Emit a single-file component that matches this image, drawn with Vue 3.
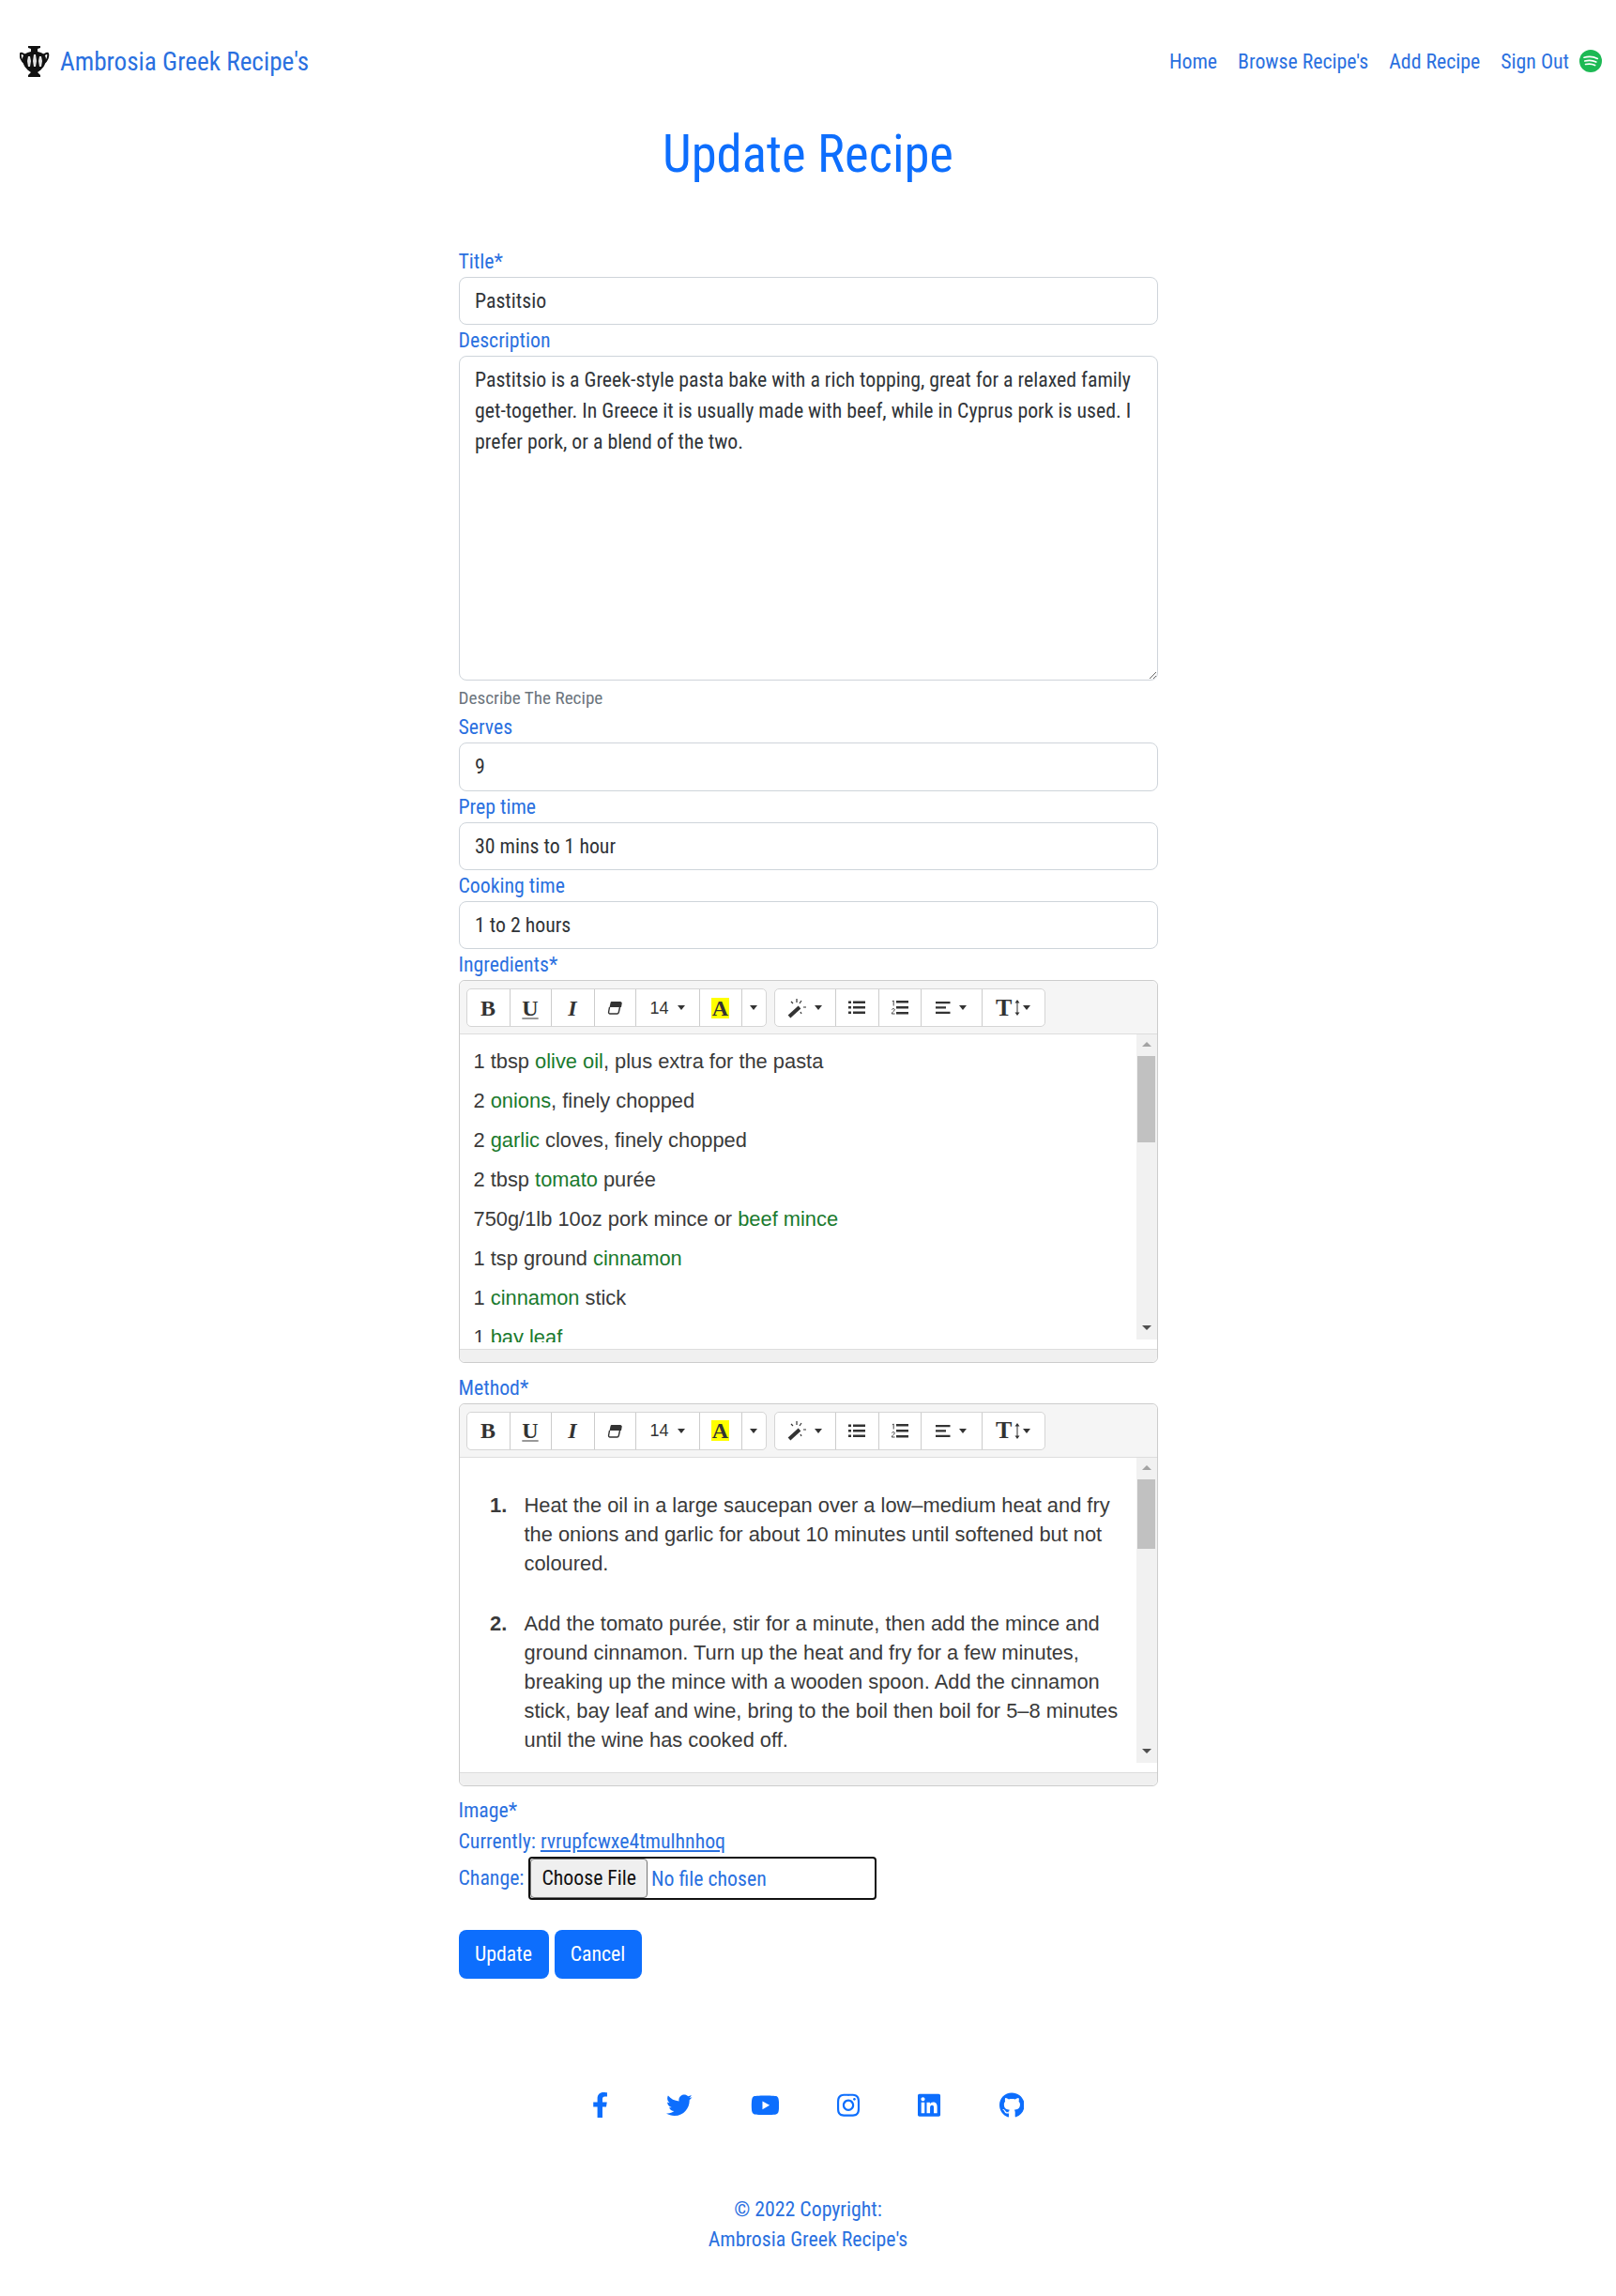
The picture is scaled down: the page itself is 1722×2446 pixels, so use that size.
<template>
  <div class="page">
    <nav class="navbar">
      <a class="brand" href="#">
        <svg class="vase" viewBox="0 0 32 33">
          <path fill="#111" d="M9 0h13v2l-3 1v3c5 1 9 3 9 8 0 6-4 11-9 14l3 3v2H9v-2l3-3c-5-3-9-8-9-14 0-5 4-7 9-8V3L9 2z" />
          <path fill="none" stroke="#111" stroke-width="2" d="M6 10C4 9 2 7 1 8c-1 3 1 8 4 10M25 10c2-1 4-3 5-2 1 3-1 8-4 10" />
          <path fill="#e4e4e4" d="M9 11h2l1 5-1 6H9l-1-6zM15 9h2l1 7-1 6h-2l-1-6zM21 11h2l1 5-1 6h-2l-1-6z" />
        </svg>
        <span class="brand-name">Ambrosia Greek Recipe's</span>
      </a>
      <div class="nav-links">
        <a href="#">Home</a>
        <a href="#">Browse Recipe's</a>
        <a href="#">Add Recipe</a>
        <a href="#">Sign Out</a>
        <svg class="spotify" viewBox="0 0 24 24">
          <circle cx="12" cy="12" r="12" fill="#1db954" />
          <path d="M5 8.2c5-1.4 10-1 14.300 1.200M5.800 12c4.300-1.100 8.400-.8 12 1.100M6.600 15.500c3.600-.8 7-.6 10 1" fill="none" stroke="#fff" stroke-width="1.700" stroke-linecap="round" />
        </svg>
      </div>
    </nav>

    <h1>Update Recipe</h1>

    <form class="recipe-form" @submit.prevent>
      <label>Title*</label>
      <input class="control" type="text" value="Pastitsio" />

      <label>Description</label>
      <textarea class="control desc" :value="description"></textarea>
      <div class="help">Describe The Recipe</div>

      <label>Serves</label>
      <input class="control" type="text" value="9" />
      <label>Prep time</label>
      <input class="control" type="text" value="30 mins to 1 hour" />
      <label>Cooking time</label>
      <input class="control" type="text" value="1 to 2 hours" />

      <template v-for="ed in editors" :key="ed.name">
        <label>{{ ed.label }}</label>
        <div class="editor" :class="ed.name">
          <div class="toolbar">
            <div class="btn-group">
              <span class="tb w46 serif"><b>B</b></span>
              <span class="tb w44 serif"><b class="under">U</b></span>
              <span class="tb w46 serif"><b><i>I</i></b></span>
              <span class="tb w44">
                <svg width="16" height="15" viewBox="0 0 16 15">
                  <path fill="#333" d="M5 1h9c1 0 2 1 1.700 2L15 7H2.500l1-4.500C3.700 1.500 4 1 5 1z" />
                  <path fill="none" stroke="#333" stroke-width="1.400" d="M2.500 7L1.600 12c-.2 1 .4 2 1.400 2h7.500c1 0 1.600-.6 1.800-1.500L13.500 7" />
                </svg>
              </span>
              <span class="tb w68 size">14<i class="caret"></i></span>
              <span class="tb w45 serif"><b class="hl">A</b></span>
              <span class="tb w26"><i class="caret"></i></span>
            </div>
            <div class="btn-group">
              <span class="tb w65">
                <svg width="24" height="22" viewBox="0 0 24 22">
                  <path stroke="#333" stroke-width="4" d="M2 20L13 10" />
                  <path stroke="#333" stroke-width="1.200" d="M4 4l2 2M10 1v4M15 3l-2 3M17 10h3M14 15l1 2" />
                </svg>
                <i class="caret"></i>
              </span>
              <span class="tb w46">
                <svg width="18" height="15" viewBox="0 0 18 15"><path fill="#333" d="M0 .5h3V3H0zM5 .5h13V3H5zM0 6h3v2.500H0zM5 6h13v2.500H5zM0 11.500h3V14H0zM5 11.500h13V14H5z" /></svg>
              </span>
              <span class="tb w45">
                <svg width="18" height="17" viewBox="0 0 18 17"><path fill="#333" d="M5 1h13v2.500H5zM5 7h13v2.500H5zM5 13h13v2.500H5z" /><path fill="none" stroke="#333" stroke-width=".900" d="M.8 1.800L2.200 1v5.500M.3 10.500c1-1.500 3-1 3 .2 0 1.500-3 2.300-3 4.300h3.300" /></svg>
              </span>
              <span class="tb w66 gap8">
                <svg width="16" height="13" viewBox="0 0 16 13"><path fill="#333" d="M0 0h15.500v2.300H0zM0 5.300h11v2.300H0zM0 10.700h15.500V13H0z" /></svg>
                <i class="caret"></i>
              </span>
              <span class="tb w66 serif tight">
                <b class="tt">T</b>
                <svg width="6" height="17" viewBox="0 0 6 17"><path fill="#333" d="M3 0l2.500 3.500h-2V13.500h2L3 17 .5 13.500h2V3.500h-2z" /></svg>
                <i class="caret"></i>
              </span>
            </div>
          </div>

          <div class="note-body">
            <div class="note-text" v-if="ed.name === 'ingredients'">
              <p v-for="(line, i) in ingredients" :key="i">
                <template v-for="(part, j) in line" :key="j">
                  <span :class="{ green: j % 2 === 1 }">{{ part }}</span>
                </template>
              </p>
            </div>
            <div class="note-text" v-else>
              <ol>
                <li v-for="(step, i) in method" :key="i">{{ step }}</li>
              </ol>
            </div>
            <div class="scrollbar">
              <div class="arrow up"></div>
              <div class="thumb" :style="{ height: ed.thumb + 'px' }"></div>
              <div class="track"></div>
              <div class="arrow down"></div>
            </div>
          </div>
          <div class="status"></div>
        </div>
      </template>

      <label>Image*</label>
      <div class="current">Currently: <a href="#">rvrupfcwxe4tmulhnhoq</a></div>
      <div class="change">
        <span>Change:</span>
        <input class="file" type="file" />
      </div>

      <div class="actions">
        <button type="button" class="update">Update</button>
        <button type="button" class="cancel">Cancel</button>
      </div>
    </form>

    <footer>
      <div class="social">
        <svg v-for="icon in icons" :key="icon.name" :viewBox="`0 0 ${icon.w} 512`" :width="icon.w * 0.0537" height="27.500">
          <path :d="icon.d" fill="#0d6efd" />
        </svg>
      </div>
      <div class="copy">
        <div>© 2022 Copyright:</div>
        <a href="#">Ambrosia Greek Recipe's</a>
      </div>
    </footer>
  </div>
</template>

<script setup>
const description = "Pastitsio is a Greek-style pasta bake with a rich topping, great for a relaxed family get-together. In Greece it is usually made with beef, while in Cyprus pork is used. I prefer pork, or a blend of the two."

const editors = [
  { name: "ingredients", label: "Ingredients*", thumb: 92 },
  { name: "method", label: "Method*", thumb: 74 }
]

// every odd part of a line is an ingredient link, shown in green
const ingredients = [
  ["1 tbsp ", "olive oil", ", plus extra for the pasta"],
  ["2 ", "onions", ", finely chopped"],
  ["2 ", "garlic", " cloves, finely chopped"],
  ["2 tbsp ", "tomato", " purée"],
  ["750g/1lb 10oz pork mince or ", "beef mince"],
  ["1 tsp ground ", "cinnamon"],
  ["1 ", "cinnamon", " stick"],
  ["1 ", "bay leaf"]
]

const method = [
  "Heat the oil in a large saucepan over a low–medium heat and fry the onions and garlic for about 10 minutes until softened but not coloured.",
  "Add the tomato purée, stir for a minute, then add the mince and ground cinnamon. Turn up the heat and fry for a few minutes, breaking up the mince with a wooden spoon. Add the cinnamon stick, bay leaf and wine, bring to the boil then boil for 5–8 minutes until the wine has cooked off."
]

const icons = [
  { name: "facebook", w: 320, d: "M279.14 288l14.22-92.66h-88.91v-60.13c0-25.35 12.42-50.06 52.24-50.06h40.42V6.26S260.43 0 225.36 0c-73.22 0-121.08 44.38-121.08 124.72v70.62H22.89V288h81.39v224h100.17V288z" },
  { name: "twitter", w: 512, d: "M459.37 151.716c.325 4.548.325 9.097.325 13.645 0 138.72-105.583 298.558-298.558 298.558-59.452 0-114.68-17.219-161.137-47.106 8.447.974 16.568 1.299 25.34 1.299 49.055 0 94.213-16.568 130.274-44.832-46.132-.975-84.792-31.188-98.112-72.772 6.498.974 12.995 1.624 19.818 1.624 9.421 0 18.843-1.3 27.614-3.573-48.081-9.747-84.143-51.98-84.143-102.985v-1.299c13.969 7.797 30.214 12.67 47.431 13.319-28.264-18.843-46.781-51.005-46.781-87.391 0-19.492 5.197-37.36 14.294-52.954 51.655 63.675 129.3 105.258 216.365 109.807-1.624-7.797-2.599-15.918-2.599-24.04 0-57.828 46.782-104.934 104.934-104.934 30.213 0 57.502 12.67 76.67 33.137 23.715-4.548 46.456-13.32 66.599-25.34-7.798 24.366-24.366 44.833-46.132 57.827 21.117-2.273 41.584-8.122 60.426-16.243-14.292 20.791-32.161 39.308-52.628 54.253z" },
  { name: "youtube", w: 576, d: "M549.655 124.083c-6.281-23.65-24.787-42.276-48.284-48.597C458.781 64 288 64 288 64S117.22 64 74.629 75.486c-23.497 6.322-42.003 24.947-48.284 48.597-11.412 42.867-11.412 132.305-11.412 132.305s0 89.438 11.412 132.305c6.281 23.65 24.787 41.5 48.284 47.821C117.22 448 288 448 288 448s170.78 0 213.371-11.486c23.497-6.321 42.003-24.171 48.284-47.821 11.412-42.867 11.412-132.305 11.412-132.305s0-89.438-11.412-132.305zm-317.51 213.508V175.185l142.739 81.205-142.739 81.201z" },
  { name: "instagram", w: 448, d: "M224.1 141c-63.6 0-114.9 51.3-114.9 114.9s51.3 114.9 114.9 114.9S339 319.5 339 255.9 287.7 141 224.1 141zm0 189.6c-41.1 0-74.7-33.5-74.7-74.7s33.5-74.7 74.7-74.7 74.7 33.5 74.7 74.7-33.6 74.7-74.7 74.7zm146.4-194.3c0 14.9-12 26.8-26.8 26.8-14.9 0-26.8-12-26.8-26.8s12-26.8 26.8-26.8 26.8 12 26.8 26.8zm76.1 27.2c-1.7-35.9-9.9-67.7-36.2-93.9-26.2-26.2-58-34.4-93.9-36.2-37-2.1-147.9-2.1-184.9 0-35.8 1.7-67.6 9.9-93.9 36.1s-34.4 58-36.2 93.9c-2.1 37-2.1 147.9 0 184.9 1.7 35.9 9.9 67.7 36.2 93.9s58 34.4 93.9 36.2c37 2.1 147.9 2.1 184.9 0 35.9-1.7 67.7-9.9 93.9-36.2 26.2-26.2 34.4-58 36.2-93.9 2.1-37 2.1-147.8 0-184.8zM398.8 388c-7.8 19.6-22.9 34.7-42.6 42.6-29.5 11.7-99.5 9-132.1 9s-102.7 2.6-132.1-9c-19.6-7.8-34.7-22.9-42.6-42.6-11.7-29.5-9-99.5-9-132.1s-2.6-102.7 9-132.1c7.8-19.6 22.9-34.7 42.6-42.6 29.5-11.7 99.5-9 132.1-9s102.7-2.6 132.1 9c19.6 7.8 34.7 22.9 42.6 42.6 11.7 29.5 9 99.5 9 132.1s2.7 102.7-9 132.1z" },
  { name: "linkedin", w: 448, d: "M416 32H31.9C14.3 32 0 46.5 0 64.3v383.4C0 465.5 14.3 480 31.9 480H416c17.6 0 32-14.5 32-32.3V64.3c0-17.8-14.4-32.3-32-32.3zM135.4 416H69V202.2h66.5V416zm-33.2-243c-21.3 0-38.5-17.3-38.5-38.5S80.9 96 102.2 96c21.2 0 38.5 17.3 38.5 38.5 0 21.3-17.2 38.5-38.5 38.5zm282.1 243h-66.4V312c0-24.8-.5-56.7-34.5-56.7-34.6 0-39.9 27-39.9 54.9V416h-66.4V202.2h63.7v29.2h.9c8.9-16.8 30.6-34.5 62.9-34.5 67.2 0 79.7 44.3 79.7 101.9V416z" },
  { name: "github", w: 496, d: "M165.9 397.4c0 2-2.3 3.6-5.2 3.6-3.3 0-5.6-1.6-5.6-3.6 0-2 2.3-3.6 5.2-3.6 3-.3 5.6 1.3 5.6 3.6zm-31.1-4.5c-.7 2 1.3 4.3 4.3 4.9 2.6 1 5.6 0 6.2-2s-1.3-4.3-4.3-5.2c-2.6-.7-5.5.3-6.2 2.3zm44.2-1.7c-2.9.7-4.9 2.6-4.6 4.9.3 2 2.9 3.3 5.9 2.6 2.9-.7 4.9-2.6 4.6-4.6-.3-1.9-3-3.2-5.9-2.9zM244.8 8C106.1 8 0 113.3 0 252c0 110.9 69.8 205.8 169.5 239.2 12.8 2.3 17.3-5.6 17.3-12.1 0-6.2-.3-40.4-.3-61.4 0 0-70 15-84.7-29.8 0 0-11.4-29.1-27.8-36.6 0 0-22.9-15.7 1.6-15.4 0 0 24.9 2 38.6 25.8 21.9 38.6 58.6 27.5 72.9 20.9 2.3-16 8.8-27.1 16-33.7-55.9-6.2-112.3-14.3-112.3-110.5 0-27.5 7.6-41.3 23.6-58.9-2.6-6.5-11.1-33.3 2.6-67.9 20.9-6.5 69 27 69 27 20-5.6 41.5-8.5 62.8-8.5s42.8 2.9 62.8 8.5c0 0 48.1-33.6 69-27 13.7 34.7 5.2 61.4 2.6 67.9 16 17.7 25.8 31.5 25.8 58.9 0 96.5-58.9 104.2-114.8 110.5 9.2 7.9 17 22.9 17 46.4 0 33.7-.3 75.4-.3 83.6 0 6.5 4.6 14.4 17.3 12.1C428.2 457.8 496 362.9 496 252 496 113.3 383.5 8 244.8 8z" }
]
</script>

<style scoped>
.page { font-family: "Roboto Condensed", "Liberation Sans Narrow", Roboto, sans-serif; font-stretch: 75%; font-size: 21.800px; line-height: 33px; color: #2a70df; background: #fff; min-height: 2446px; }
a { color: #2a70df; text-decoration: none; }

.navbar { display: flex; justify-content: space-between; align-items: center; padding: 48px 15px 0 21px; height: 34px; box-sizing: content-box; }
.brand { display: flex; align-items: center; gap: 11px; font-size: 27.200px; }
.brand-name { margin-top: 2px; }
.vase { width: 32px; height: 33px; }
.nav-links { display: flex; align-items: center; gap: 22px; }
.spotify { width: 24px; height: 24px; margin-left: -11px; }

h1 { margin: 49px 0 65px; font-size: 54.600px; line-height: 66px; font-weight: 400; text-align: center; color: #0d6efd; }

.recipe-form { width: 745px; margin: 0 auto; display: flex; flex-direction: column; }
.recipe-form label { display: block; }
.control { display: block; width: 100%; box-sizing: border-box; height: 51.300px; padding: 8px 16.500px; border: 1px solid #ced4da; border-radius: 8px; font: inherit; color: #303438; background: #fff; outline: none; }
.desc { height: 346px; resize: vertical; }
.help { margin-top: 5px; font-size: 19.200px; line-height: 28px; color: #6c757d; }

.editor { border: 1px solid #ccc; border-radius: 6px; margin-bottom: 9.400px; }
.toolbar { display: flex; gap: 8px; height: 57px; box-sizing: border-box; padding: 8px 7px; background: #f5f5f5; border-bottom: 1px solid #ddd; border-radius: 6px 6px 0 0; }
.btn-group { display: flex; background: #fff; border: 1px solid #d5d5d5; border-radius: 5px; height: 41px; box-sizing: border-box; }
.tb { display: flex; align-items: center; justify-content: center; gap: 5px; box-sizing: border-box; border-right: 1px solid #ccc; color: #333; font-family: "Liberation Sans", sans-serif; font-stretch: normal; font-size: 18px; line-height: 1; }
.tb:last-child { border-right: 0; }
.serif { font-family: "Liberation Serif", serif; font-size: 24px; }
.size { gap: 9px; }
.gap8 { gap: 9px; }
.tight { gap: 3px; }
.under { text-decoration: underline; text-decoration-color: #999; text-underline-offset: 2px; }
.hl { background: #ff0; padding: 0 1px; line-height: 22px; }
.tt { font-size: 26px; }
.caret { display: inline-block; width: 0; height: 0; border: 4.500px solid transparent; border-top: 5px solid #333; border-bottom: 0; }
.w26 { width: 25px; } .w44 { width: 44px; } .w45 { width: 45px; } .w46 { width: 46px; } .w65 { width: 65px; } .w66 { width: 65.500px; } .w68 { width: 68px; }

.note-body { display: flex; height: 335px; }
.note-text { flex: 1; min-width: 0; height: 328px; overflow: hidden; font-family: "Liberation Sans", Arial, sans-serif; font-stretch: normal; font-size: 21.850px; color: #3a3a3a; padding-left: 15px; padding-right: 10px; }
.note-text p { margin: 0; line-height: 42px; }
.ingredients .note-text { padding-top: 8px; box-sizing: border-box; }
.green { color: #1a7a2e; }
.note-text ol { margin: 0; padding: 35px 0 0 54px; line-height: 31px; }
.note-text li { margin-bottom: 33px; }
.note-text li::marker { content: counter(list-item) ".\00a0\00a0\00a0"; font-weight: 700; }
.scrollbar { width: 22px; height: 325px; display: flex; flex-direction: column; align-items: center; background: #f1f1f1; }
.thumb { width: 19px; background: #c1c1c1; flex: none; }
.track { flex: 1; }
.arrow { height: 23px; width: 100%; flex: none; position: relative; }
.arrow::after { content: ""; position: absolute; left: 6px; top: 8px; border: 5px solid transparent; }
.arrow.up::after { border-bottom-color: #a3a3a3; border-top: 0; }
.arrow.down::after { border-top-color: #505050; border-bottom: 0; }
.status { height: 14px; box-sizing: border-box; background: #f0f0f0; border-top: 1px solid #ddd; border-radius: 0 0 6px 6px; }

.change { display: flex; align-items: center; gap: 5px; }
.current a { text-decoration: underline; }
.file { width: 371px; height: 46px; box-sizing: border-box; border: 2px solid #111; border-radius: 4px; font: inherit; color: #2a70df; background: #fff; }
.file::file-selector-button { height: 42px; font: inherit; color: #111; background: #efefef; border: 1px solid #767676; border-radius: 4px; padding: 0 11px; margin: 0 4px 0 0; }
.actions { display: flex; gap: 6px; margin-top: 32px; }
.actions button { height: 52px; border: 0; border-radius: 8px; background: #0d6efd; color: #fff; font: inherit; }
.update { width: 96px; }
.cancel { width: 93px; }

footer { text-align: center; }
.social { display: flex; justify-content: center; gap: 62px; margin-top: 121px; }
.copy { margin-top: 81.500px; line-height: 32px; }
</style>

<style>
body { background: #fff; }
</style>
